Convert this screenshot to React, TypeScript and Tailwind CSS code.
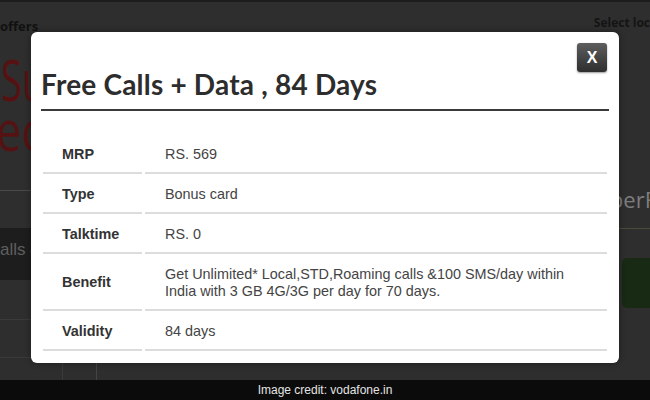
import React from 'react'

const rows: { label: string; value: React.ReactNode; tall?: boolean }[] = [
  { label: 'MRP', value: 'RS. 569' },
  { label: 'Type', value: 'Bonus card' },
  { label: 'Talktime', value: 'RS. 0' },
  {
    label: 'Benefit',
    value: (
      <>
        Get Unlimited* Local,STD,Roaming calls &amp;100 SMS/day within
        <br />
        India with 3 GB 4G/3G per day for 70 days.
      </>
    ),
    tall: true,
  },
  { label: 'Validity', value: '84 days' },
]

export default function App() {
  return (
    <div className="relative w-[650px] h-[400px] overflow-hidden bg-[#2e2e2e] flex flex-col font-['Liberation_Sans',Arial,sans-serif]">
      {/* Page behind the overlay */}
      <div className="h-[40px] border-t-2 border-[#1c1c1c] flex justify-between">
        <span className="mt-[18px] text-[13px] font-bold text-[#111] font-['Open_Sans',sans-serif] leading-none">offers</span>
        <span className="mt-[15px] text-[12px] font-bold text-[#141414] font-['Open_Sans',sans-serif] leading-none whitespace-nowrap">Select loc</span>
      </div>

      <div className="flex-1 flex justify-between">
        {/* left column */}
        <div className="w-[100px] flex flex-col">
          <div className="text-[56px] leading-[50px] text-[#561212] font-['Open_Sans',sans-serif] ml-[1px] mt-[14px] scale-x-[0.68] origin-left whitespace-nowrap">Su</div>
          <div className="text-[56px] leading-[50px] text-[#561212] font-['Open_Sans',sans-serif] -ml-[4px] scale-x-[0.8] origin-left whitespace-nowrap">ec</div>
          <div className="mt-[36px] h-[1px] bg-[#4a4a4a]" />
          <div className="mt-[37px] h-[52px] bg-[#1d1d1d] text-[#5f5f5f] text-[17px] pt-[9px] whitespace-nowrap">alls &amp;</div>
          <div className="h-[40px] border-b border-[#3a3a3a]" />
          <div className="h-[38px] border-b border-[#3a3a3a] flex">
            <div className="w-[63px] border-r border-[#3a3a3a]" />
          </div>
          <div className="flex-1 flex">
            <div className="w-[63px] border-r border-[#3a3a3a]" />
            <div className="w-[34px] border-r border-[#444]" />
          </div>
        </div>

        {/* right column */}
        <div className="w-[40px] flex flex-col items-end">
          <div className="mt-[148px] text-[22px] text-[#7d7d7d] font-['Open_Sans',sans-serif] leading-none whitespace-nowrap -mr-[6px]">perF</div>
          <div className="mt-[18px] w-full h-[1px] bg-[#4b4b3c]" />
          <div className="mt-[29px] w-[28px] h-[50px] rounded-l-[5px] bg-[#182a13]" />
        </div>
      </div>

      <div className="h-[20px] bg-[#0b0b0b] flex items-center justify-center">
        <span className="text-[12px] text-[#e4e4e4] leading-none">Image credit: vodafone.in</span>
      </div>

      {/* Modal */}
      <div className="absolute left-[31px] top-[32px] w-[588px] h-[331px] bg-white rounded-[6px] shadow-[0_0_6px_rgba(0,0,0,0.4)] px-[10px]">
        <button className="absolute right-[12px] top-[11px] w-[30px] h-[29px] rounded-[3px] bg-gradient-to-b from-[#5e5e5e] to-[#2f2f2f] text-white text-[16px] font-bold leading-none flex items-center justify-center shadow-[0_1px_2px_rgba(0,0,0,0.4)]">
          X
        </button>
        <h1 className="mt-[32px] text-[28px] leading-[40px] font-bold text-[#2d2d2d] font-['Lato',sans-serif] tracking-[0.2px]">
          Free Calls + Data , 84 Days
        </h1>
        <div className="mt-[5px] h-[2px] bg-[#3a3a3a]" />
        <div className="mt-[23px] grid grid-cols-[99px_1fr] gap-x-[3px] px-[2px]">
          {rows.map((r) => (
            <React.Fragment key={r.label}>
              <div
                className={`${r.tall ? 'h-[57px]' : 'h-[40px]'} border-b-2 border-[#dcdcdc] pl-[19px] pt-[3px] flex items-center text-[14.4px] font-bold text-[#333]`}
              >
                {r.label}
              </div>
              <div
                className={`${r.tall ? 'h-[57px]' : 'h-[40px]'} border-b-2 border-[#dcdcdc] pl-[20px] pt-[3px] flex items-center text-[14.4px] leading-[17px] text-[#444]`}
              >
                <span>{r.value}</span>
              </div>
            </React.Fragment>
          ))}
        </div>
      </div>
    </div>
  )
}
